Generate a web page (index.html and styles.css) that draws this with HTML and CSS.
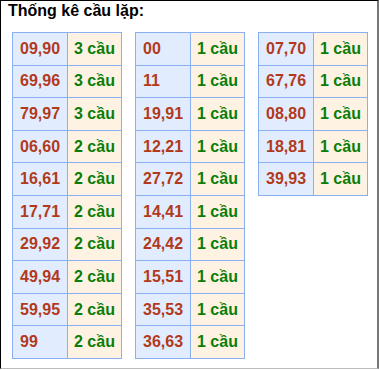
FILE: index.html
```html
<!DOCTYPE html>
<html>
<head>
<meta charset="utf-8">
<link rel="stylesheet" href="styles.css">
</head>
<body>
<div class="box">
  <div class="title">Thống kê cầu lặp:</div>
  <div class="tables">
    <table class="t">
      <tr><td class="n">09,90</td><td class="c">3 cầu</td></tr>
      <tr><td class="n">69,96</td><td class="c">3 cầu</td></tr>
      <tr><td class="n">79,97</td><td class="c">3 cầu</td></tr>
      <tr><td class="n">06,60</td><td class="c">2 cầu</td></tr>
      <tr><td class="n">16,61</td><td class="c">2 cầu</td></tr>
      <tr><td class="n">17,71</td><td class="c">2 cầu</td></tr>
      <tr><td class="n">29,92</td><td class="c">2 cầu</td></tr>
      <tr><td class="n">49,94</td><td class="c">2 cầu</td></tr>
      <tr><td class="n">59,95</td><td class="c">2 cầu</td></tr>
      <tr><td class="n">99</td><td class="c">2 cầu</td></tr>
    </table>
    <table class="t">
      <tr><td class="n">00</td><td class="c">1 cầu</td></tr>
      <tr><td class="n">11</td><td class="c">1 cầu</td></tr>
      <tr><td class="n">19,91</td><td class="c">1 cầu</td></tr>
      <tr><td class="n">12,21</td><td class="c">1 cầu</td></tr>
      <tr><td class="n">27,72</td><td class="c">1 cầu</td></tr>
      <tr><td class="n">14,41</td><td class="c">1 cầu</td></tr>
      <tr><td class="n">24,42</td><td class="c">1 cầu</td></tr>
      <tr><td class="n">15,51</td><td class="c">1 cầu</td></tr>
      <tr><td class="n">35,53</td><td class="c">1 cầu</td></tr>
      <tr><td class="n">36,63</td><td class="c">1 cầu</td></tr>
    </table>
    <table class="t">
      <tr><td class="n">07,70</td><td class="c">1 cầu</td></tr>
      <tr><td class="n">67,76</td><td class="c">1 cầu</td></tr>
      <tr><td class="n">08,80</td><td class="c">1 cầu</td></tr>
      <tr><td class="n">18,81</td><td class="c">1 cầu</td></tr>
      <tr><td class="n">39,93</td><td class="c">1 cầu</td></tr>
    </table>
  </div>
</div>
</body>
</html>
```
FILE: styles.css
```css
html, body {
  margin: 0;
  padding: 0;
  background: #fff;
}
body {
  font-family: "Liberation Sans", Arial, sans-serif;
}
.box {
  width: 379px;
  height: 369px;
  box-sizing: border-box;
  border-top: 1px solid #000;
  border-left: 1px solid #000;
  border-right: 2px solid #777;
  border-bottom: 1px solid #bbb;
  padding: 1px 0 0 7px;
}
.title {
  font-weight: bold;
  font-size: 16px;
  line-height: 18px;
  color: #000;
}
.tables {
  display: flex;
  align-items: flex-start;
  gap: 13px;
  margin-top: 12px;
  padding-left: 4px;
}
.t {
  border-collapse: collapse;
  width: 110px;
  table-layout: fixed;
}
.t td {
  border: 1px solid #8ab0f2;
  height: 32.6px;
  padding: 0 0 0 7px;
  font-size: 16px;
  font-weight: bold;
  box-sizing: border-box;
  white-space: nowrap;
}
.t td.n {
  width: 55px;
  background: #e1edff;
  color: #b23a1c;
}
.t td.c {
  width: 54px;
  background: #fef3e2;
  color: #0a7d0a;
  padding-left: 6px;
}
```
